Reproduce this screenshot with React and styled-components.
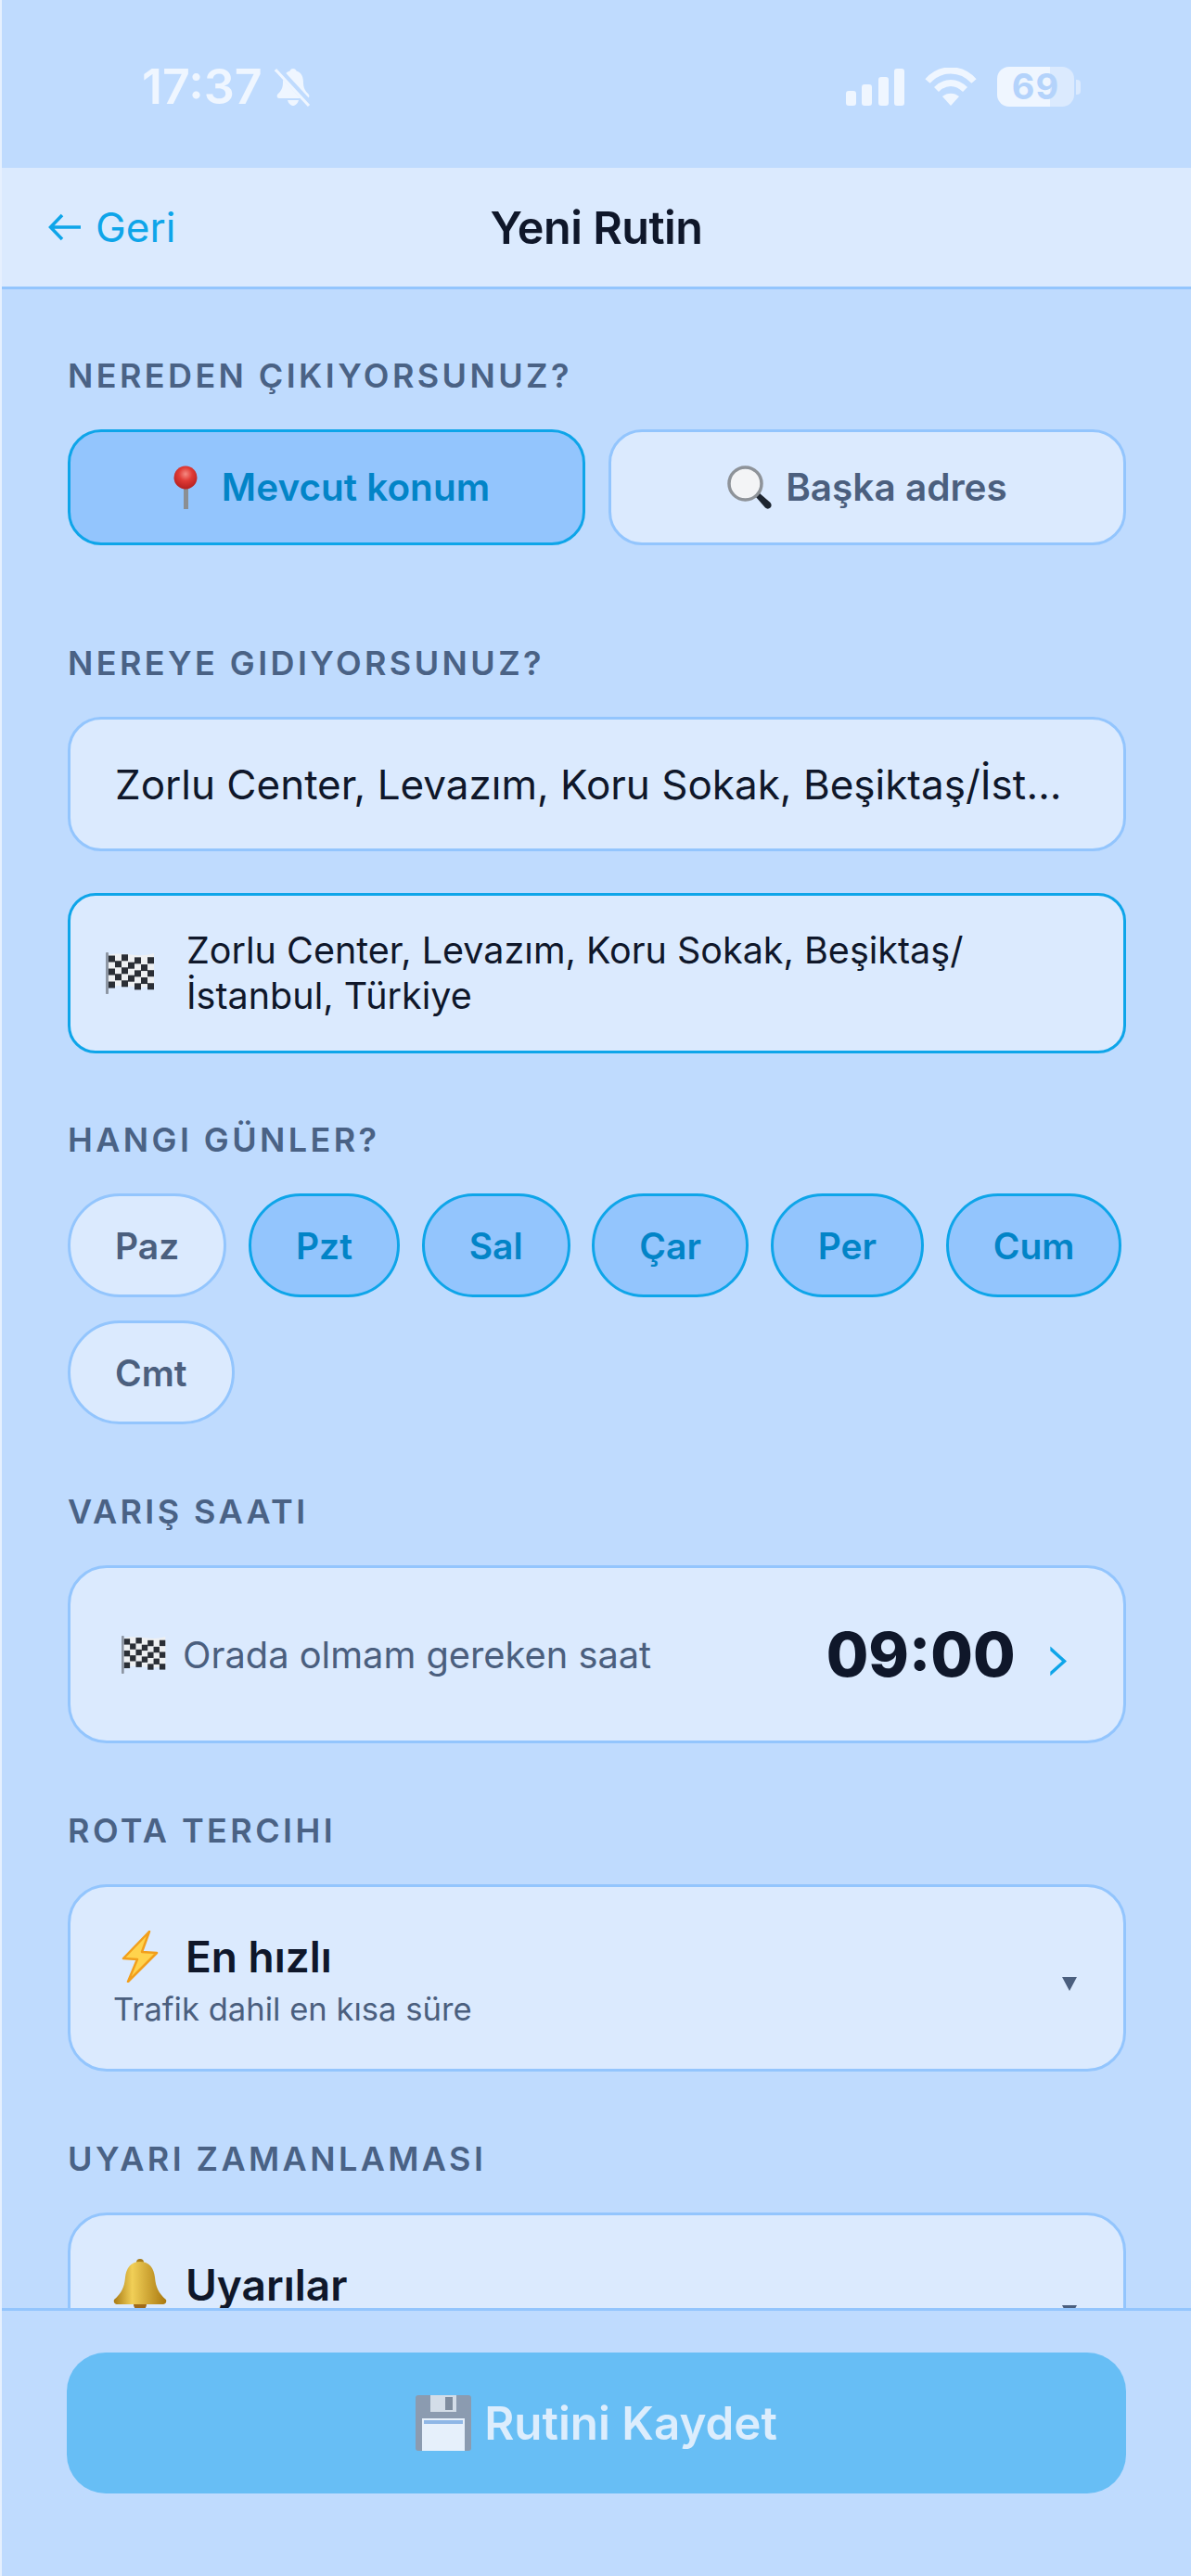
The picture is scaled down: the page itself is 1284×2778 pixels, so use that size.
import React from 'react';
import styled, { createGlobalStyle } from 'styled-components';

const BG = '#bfdbfe';
const PANEL = '#dbeafe';
const LINE = '#93c5fd';
const ACCENT = '#0ea5e9';
const ACCENT_TEXT = '#0284c7';
const INK = '#0f172a';
const MUTED = '#4b5f7e';

const GlobalStyle = createGlobalStyle`
  html, body {
    margin: 0;
    padding: 0;
    background: ${BG};
  }
  * {
    box-sizing: border-box;
  }
`;

const Screen = styled.div`
  width: 1284px;
  height: 2778px;
  display: flex;
  flex-direction: column;
  overflow: hidden;
  background: ${BG};
  border-left: 2px solid #e6f0fe;
  font-family: Inter, "Noto Sans", "Liberation Sans", sans-serif;
  color: ${INK};
`;

const StatusBar = styled.div`
  height: 181px;
  flex: none;
  display: flex;
  align-items: center;
  justify-content: space-between;
  padding: 6px 119px 0 151px;
  color: #eff6ff;
`;

const StatusGroup = styled.div`
  display: flex;
  align-items: center;
  gap: ${p => p.$gap}px;
`;

const Clock = styled.span`
  font-size: 52px;
  font-weight: 600;
  line-height: 1;
`;

const BatteryWrap = styled.div`
  display: flex;
  align-items: center;
  gap: 2px;
`;

const BatteryShell = styled.div`
  width: 83px;
  height: 43px;
  border-radius: 13px;
  background: linear-gradient(90deg, #eff6ff 0 69%, #dbeafe 69% 100%);
  color: #b4d3fb;
  font-size: 38px;
  font-weight: 700;
  line-height: 43px;
  text-align: center;
  letter-spacing: 1px;
`;

const BatteryNub = styled.div`
  width: 5px;
  height: 16px;
  border-radius: 0 4px 4px 0;
  background: #dbeafe;
`;

const NavBar = styled.div`
  height: 131px;
  flex: none;
  display: grid;
  grid-template-columns: 1fr auto 1fr;
  align-items: center;
  padding: 0 50px;
  background: ${PANEL};
  border-bottom: 3px solid ${LINE};
`;

const BackLink = styled.div`
  display: flex;
  align-items: center;
  gap: 15px;
  color: ${ACCENT};
  font-size: 44px;
  font-weight: 400;
`;

const NavTitle = styled.div`
  font-size: 48.500px;
  font-weight: 600;
  letter-spacing: -0.5px;
`;

const Content = styled.div`
  flex: 1;
  min-height: 0;
  overflow: hidden;
  padding: 71px 70px 0 71px;
`;

const Section = styled.section`
  margin-bottom: ${p => p.$after || 72}px;
`;

const Label = styled.div`
  height: 44px;
  margin-bottom: 36px;
  font-size: 36px;
  line-height: 44px;
  font-weight: 600;
  letter-spacing: 3.400px;
  color: #4a6285;
`;

const ChoiceRow = styled.div`
  display: grid;
  grid-template-columns: 1fr 1fr;
  gap: 25px;
`;

const Choice = styled.div`
  height: 125px;
  display: flex;
  align-items: center;
  justify-content: center;
  gap: 15px;
  border-radius: 36px;
  border: 3px solid ${p => (p.$active ? ACCENT : LINE)};
  background: ${p => (p.$active ? LINE : PANEL)};
  color: ${p => (p.$active ? ACCENT_TEXT : MUTED)};
  font-size: 40.500px;
  font-weight: 600;
`;

const AddressField = styled.div`
  height: 145px;
  padding: 0 50px 0 48px;
  display: flex;
  align-items: center;
  border-radius: 36px;
  border: 3px solid ${LINE};
  background: ${PANEL};
  font-size: 44px;
`;

const AddressText = styled.span`
  display: block;
  min-width: 0;
  overflow: hidden;
  white-space: nowrap;
  text-overflow: ellipsis;
`;

const Suggestion = styled.div`
  height: 173px;
  margin-top: 45px;
  padding: 0 60px 0 38px;
  display: flex;
  align-items: center;
  gap: 32px;
  border-radius: 30px;
  border: 3px solid ${ACCENT};
  background: ${PANEL};
  font-size: 39.500px;
  line-height: 49px;
`;

const DayGrid = styled.div`
  display: flex;
  flex-wrap: wrap;
  gap: 25px 23.700px;
`;

const DayChip = styled.div`
  height: 112px;
  padding: 0 48px;
  display: flex;
  align-items: center;
  border-radius: 56px;
  border: 3px solid ${p => (p.$active ? ACCENT : LINE)};
  background: ${p => (p.$active ? LINE : PANEL)};
  color: ${p => (p.$active ? ACCENT_TEXT : MUTED)};
  font-size: 39px;
  font-weight: 600;
`;

const Card = styled.div`
  display: flex;
  align-items: center;
  justify-content: space-between;
  border-radius: 42px;
  border: 3px solid ${LINE};
  background: ${PANEL};
`;

const TimeCard = styled(Card)`
  height: 192px;
  padding: 0 54px 0 55px;
`;

const TimeLabel = styled.div`
  display: flex;
  align-items: center;
  gap: 16px;
  font-size: 39.800px;
  color: ${MUTED};
`;

const TimeValue = styled.div`
  display: flex;
  align-items: center;
  gap: 32px;
`;

const Clockface = styled.span`
  font-size: 66px;
  font-weight: 800;
  line-height: 1;
`;

const Chevron = styled.span`
  font-size: 76px;
  font-weight: 300;
  line-height: 1;
  color: ${ACCENT};
  font-family: "DejaVu Sans", sans-serif;
  margin-top: 8px;
`;

const SelectCard = styled(Card)`
  height: 202px;
  padding: 0 50px 0 46px;
`;

const SelectBody = styled.div`
  align-self: flex-start;
  padding-top: 46px;
`;

const SelectTitle = styled.div`
  display: flex;
  align-items: center;
  gap: 20px;
  height: 58px;
  font-size: 46px;
  font-weight: 600;
`;

const SelectNote = styled.div`
  margin-top: 3px;
  font-size: 34.600px;
  line-height: 48px;
  color: ${MUTED};
`;

const Caret = styled.div`
  width: 0;
  height: 0;
  margin-top: 12px;
  border-left: 8px solid transparent;
  border-right: 8px solid transparent;
  border-top: 15px solid ${MUTED};
`;

const Footer = styled.div`
  height: 289px;
  flex: none;
  padding: 45px 70px 0 70px;
  background: ${BG};
  border-top: 3px solid ${LINE};
`;

const SaveButton = styled.div`
  height: 152px;
  display: flex;
  align-items: center;
  justify-content: center;
  gap: 14px;
  border-radius: 42px;
  background: #67bef5;
  color: #dcedfd;
  font-size: 49.300px;
  font-weight: 600;
`;

const BellSlash = () => (
  <svg width="40" height="43" viewBox="0 0 40 43">
    <path
      fill="currentColor"
      d="M20 2c2 0 3 1 3.500 2.500C29 6 31 11 31 17c0 6 2 9 6 13 1 2 0 4-2 4H5c-2 0-3-2-2-4 4-4 6-7 6-13 0-6 2-11 7.500-12.500C17 3 18 2 20 2zM14 36h12c-1 3.500-3.500 6-6 6s-5-2.500-6-6z"
    />
    <path stroke={BG} strokeWidth="7" d="M3 2l36 39" />
    <path stroke="currentColor" strokeWidth="3" d="M1 3l36 39" />
  </svg>
);

const Signal = () => (
  <svg width="63" height="40" viewBox="0 0 63 40" fill="currentColor">
    <rect x="0" y="24" width="11" height="16" rx="3" />
    <rect x="17" y="17" width="11" height="23" rx="3" />
    <rect x="35" y="9" width="11" height="31" rx="3" />
    <rect x="52" y="0" width="11" height="40" rx="3" />
  </svg>
);

const Wifi = () => (
  <svg width="56" height="41" viewBox="0 0 56 41" fill="none" stroke="currentColor">
    <path strokeWidth="7" d="M3 14.500C17-1 39-1 53 14.500" />
    <path strokeWidth="7" d="M12.500 23.500C22 14 34 14 43.500 23.500" />
    <path fill="currentColor" stroke="none" d="M19 31c5-4.500 13-4.500 18 0l-9 10z" />
  </svg>
);

const BackArrow = () => (
  <svg width="36" height="30" viewBox="0 0 36 30" fill="none" stroke={ACCENT} strokeWidth="3.500">
    <path d="M35 15H3M15 2L2.500 15 15 28" />
  </svg>
);

const Pin = () => (
  <svg width="48" height="48" viewBox="0 0 48 48">
    <defs>
      <radialGradient id="pinBall" cx="0.5" cy="0.35" r="0.65">
        <stop offset="0" stopColor="#f58a82" />
        <stop offset="0.45" stopColor="#e03a35" />
        <stop offset="1" stopColor="#b3201f" />
      </radialGradient>
    </defs>
    <rect x="22" y="22" width="5" height="25" fill="#8b8f93" />
    <circle cx="24" cy="13" r="12.500" fill="url(#pinBall)" />
  </svg>
);

const Magnifier = () => (
  <svg width="48" height="48" viewBox="0 0 48 48">
    <path d="M31 34l4-4 11.500 10c1.500 2 1.500 4 0 5.500s-4 1.500-5.500 0z" fill="#1d2530" />
    <circle cx="19.500" cy="19.500" r="17.500" fill="#f3f4f6" stroke="#8e9399" strokeWidth="3.500" />
  </svg>
);

const flagColumns = [0, 1, 2, 3, 4, 5, 6];
const flagRows = [0, 1, 2, 3, 4];

const CheckeredFlag = ({ width }) => (
  <svg width={width} height={width * 0.82} viewBox="0 0 55 45">
    <rect x="0" y="0" width="3" height="45" rx="1" fill="#8d96a3" />
    <path d="M3 3c16-5 30 4 49-2v35c-19 5-33-4-49 2z" fill="#eef0f2" />
    {flagColumns.map(col =>
      flagRows.map(row =>
        (col + row) % 2 === 0 ? (
          <rect
            key={`${col}-${row}`}
            x={3 + col * 7}
            y={4 + row * 7 + Math.sin(col * 0.9 + 3.400) * 2}
            width="7"
            height="7"
            fill="#2a2e35"
          />
        ) : null
      )
    )}
  </svg>
);

const Bolt = () => (
  <svg width="58" height="56" viewBox="-10 0 58 56">
    <path
      d="M29 1L1 30l15 1L6 55l31-31-16-1z"
      fill="#ffd34d"
      stroke="#f29f1c"
      strokeWidth="2.500"
      strokeLinejoin="round"
    />
  </svg>
);

const GoldBell = () => (
  <svg width="58" height="58" viewBox="0 0 58 58">
    <defs>
      <linearGradient id="bellGold" x1="0" y1="0" x2="1" y2="0">
        <stop offset="0" stopColor="#a87a14" />
        <stop offset="0.35" stopColor="#f1cf57" />
        <stop offset="1" stopColor="#a9780f" />
      </linearGradient>
    </defs>
    <circle cx="29" cy="5" r="4" fill="#a87d1a" />
    <circle cx="29" cy="50" r="7" fill="#9f6a1a" />
    <path
      d="M29 4c10 0 15 7 16 17 1 11 4 17 12 24 1 3-1 5-4 5H5c-3 0-5-2-4-5 8-7 11-13 12-24C14 11 19 4 29 4z"
      fill="url(#bellGold)"
    />
  </svg>
);

const Floppy = () => (
  <svg width="60" height="60" viewBox="0 0 60 60">
    <rect x="0" y="0" width="60" height="60" rx="3" fill="#8b9bb0" />
    <rect x="16" y="0" width="28" height="18" fill="#d3dde8" />
    <rect x="32" y="2" width="8" height="14" fill="#7f8d9f" />
    <rect x="7" y="25" width="46" height="35" fill="#e6f0fb" />
    <rect x="9" y="27" width="42" height="4" fill="#8fb7e6" />
  </svg>
);

const days = [
  { name: 'Paz' },
  { name: 'Pzt', active: true },
  { name: 'Sal', active: true },
  { name: 'Çar', active: true },
  { name: 'Per', active: true },
  { name: 'Cum', active: true },
  { name: 'Cmt' },
];

export default function App() {
  return (
    <Screen>
      <GlobalStyle />

      <StatusBar>
        <StatusGroup $gap={13}>
          <Clock>17:37</Clock>
          <BellSlash />
        </StatusGroup>
        <StatusGroup $gap={22}>
          <Signal />
          <Wifi />
          <BatteryWrap>
            <BatteryShell>69</BatteryShell>
            <BatteryNub />
          </BatteryWrap>
        </StatusGroup>
      </StatusBar>

      <NavBar>
        <BackLink>
          <BackArrow />
          Geri
        </BackLink>
        <NavTitle>Yeni Rutin</NavTitle>
      </NavBar>

      <Content>
        <Section $after={105}>
          <Label>NEREDEN ÇIKIYORSUNUZ?</Label>
          <ChoiceRow>
            <Choice $active>
              <Pin />
              Mevcut konum
            </Choice>
            <Choice>
              <Magnifier />
              Başka adres
            </Choice>
          </ChoiceRow>
        </Section>

        <Section $after={71}>
          <Label>NEREYE GIDIYORSUNUZ?</Label>
          <AddressField>
            <AddressText>Zorlu Center, Levazım, Koru Sokak, Beşiktaş/İstanbul, Türkiye</AddressText>
          </AddressField>
          <Suggestion>
            <CheckeredFlag width={55} />
            <div>
              Zorlu Center, Levazım, Koru Sokak, Beşiktaş/
              <br />
              İstanbul, Türkiye
            </div>
          </Suggestion>
        </Section>

        <Section>
          <Label>HANGI GÜNLER?</Label>
          <DayGrid>
            {days.map(day => (
              <DayChip key={day.name} $active={day.active}>
                {day.name}
              </DayChip>
            ))}
          </DayGrid>
        </Section>

        <Section>
          <Label>VARIŞ SAATI</Label>
          <TimeCard>
            <TimeLabel>
              <CheckeredFlag width={50} />
              Orada olmam gereken saat
            </TimeLabel>
            <TimeValue>
              <Clockface>09:00</Clockface>
              <Chevron>›</Chevron>
            </TimeValue>
          </TimeCard>
        </Section>

        <Section>
          <Label>ROTA TERCIHI</Label>
          <SelectCard>
            <SelectBody>
              <SelectTitle>
                <Bolt />
                En hızlı
              </SelectTitle>
              <SelectNote>Trafik dahil en kısa süre</SelectNote>
            </SelectBody>
            <Caret />
          </SelectCard>
        </Section>

        <Section>
          <Label>UYARI ZAMANLAMASI</Label>
          <SelectCard>
            <SelectBody>
              <SelectTitle>
                <GoldBell />
                Uyarılar
              </SelectTitle>
            </SelectBody>
            <Caret />
          </SelectCard>
        </Section>
      </Content>

      <Footer>
        <SaveButton>
          <Floppy />
          Rutini Kaydet
        </SaveButton>
      </Footer>
    </Screen>
  );
}
